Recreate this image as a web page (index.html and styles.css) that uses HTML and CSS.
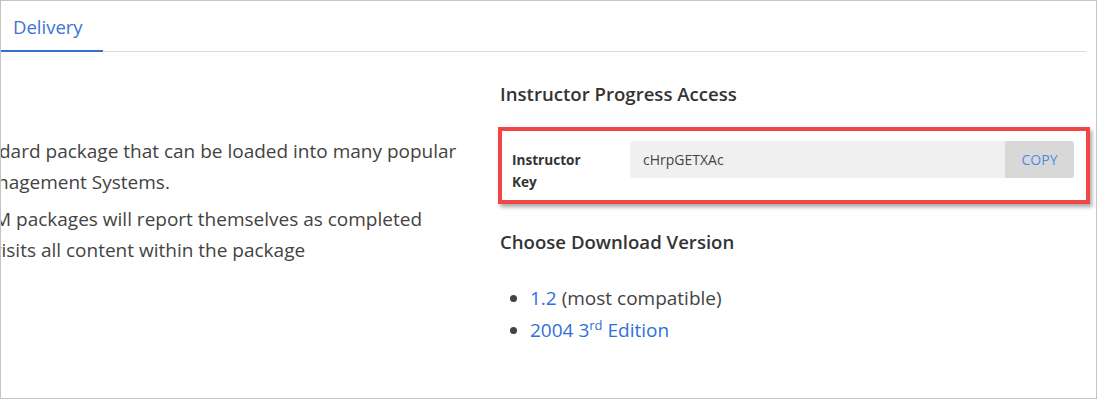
FILE: index.html
```html
<!DOCTYPE html>
<html lang="en">

<head>
    <meta charset="UTF-8">
    <meta name="viewport" content="width=device-width, initial-scale=1.0">
    <title>Delivery</title>
    <link rel="stylesheet" href="styles.css">
</head>

<body>
    <div class="frame">
        <!-- 标签栏 -->
        <div class="tabs">
            <span class="tab active">Delivery</span>
        </div>

        <div class="content">
            <!-- 左侧说明 -->
            <div class="intro">
                <p>
                    <span class="line">dard package that can be loaded into many popular</span>
                    <span class="line cut2">nagement Systems.</span>
                </p>
                <p>
                    <span class="line cut3">M packages will report themselves as completed</span>
                    <span class="line cut4">visits all content within the package</span>
                </p>
            </div>

            <!-- 右侧 -->
            <div class="side">
                <h3 class="heading">Instructor Progress Access</h3>
                <div class="key-box">
                    <label class="key-label">Instructor<br>Key</label>
                    <div class="key-field">
                        <span class="key-value">cHrpGETXAc</span>
                        <button class="copy">COPY</button>
                    </div>
                </div>

                <h3 class="heading second">Choose Download Version</h3>
                <ul class="versions">
                    <li><a href="#">1.2</a> (most compatible)</li>
                    <li><a href="#">2004 3<sup>rd</sup> Edition</a></li>
                </ul>
            </div>
        </div>
    </div>
</body>

</html>
```
FILE: styles.css
```css
      * {
          box-sizing: border-box;
      }

      body {
          margin: 0;
          font-family: "Open Sans", "Noto Sans", sans-serif;
          color: #434343;
      }

      .frame {
          width: 1097px;
          height: 399px;
          border: 1px solid #c3c3c3;
          overflow: hidden;
      }

      .tabs {
          display: flex;
          height: 51px;
          margin-right: 10px;
          border-bottom: 1px solid #dcdcdc;
      }

      .tab {
          width: 102px;
          padding: 13px 0 0 12px;
          font-size: 18.5px;
          color: #3a74d6;
      }

      .tab.active {
          border-bottom: 2px solid #3670cf;
          margin-bottom: -1px;
      }

      .content {
          display: grid;
          grid-template-columns: 497px 1fr;
          padding-right: 6px;
      }

      /* 左边的文字被裁掉一部分 */
      .intro {
          overflow: hidden;
          padding-top: 84px;
          font-size: 19px;
          line-height: 31px;
      }

      .intro p {
          margin: 0 0 6px;
      }

      .line {
          display: block;
          white-space: nowrap;
          margin-left: -2px;
      }

      .line.cut2 {
          margin-left: -4px;
      }

      .line.cut3 {
          margin-left: -7px;
      }

      .line.cut4 {
          margin-left: -9px;
      }

      .side {
          padding-top: 30px;
      }

      .heading {
          margin: 0 0 21px 2px;
          font-size: 18.6px;
          line-height: 24px;
          font-weight: 600;
          color: #333;
      }

      .heading.second {
          margin-top: 26px;
          margin-bottom: 28px;
      }

      .key-box {
          display: flex;
          align-items: flex-start;
          padding: 10px 12px 7px 10px;
          border: 4px solid #f24545;
          box-shadow: 2px 3px 4px rgba(0, 0, 0, 0.35);
      }

      .key-label {
          width: 118px;
          padding-top: 8px;
          font-size: 13.6px;
          line-height: 22px;
          font-weight: 700;
          color: #333;
      }

      .key-field {
          flex: 1;
          display: flex;
          height: 37px;
      }

      .key-value {
          flex: 1;
          padding-left: 13px;
          line-height: 37px;
          font-size: 14px;
          color: #444;
          background-color: #f0f0f0;
          border-radius: 3px 0 0 3px;
      }

      .copy {
          width: 69px;
          border: none;
          font-family: inherit;
          font-size: 14px;
          color: #4a8fdf;
          background-color: #d8d8d8;
          border-radius: 0 3px 3px 0;
      }

      .versions {
          margin: 0;
          padding-left: 32px;
          font-size: 19px;
          line-height: 32px;
      }

      .versions a {
          color: #2f6fd8;
          text-decoration: none;
      }

      .versions sup {
          font-size: 13px;
          line-height: 0;
      }
```
